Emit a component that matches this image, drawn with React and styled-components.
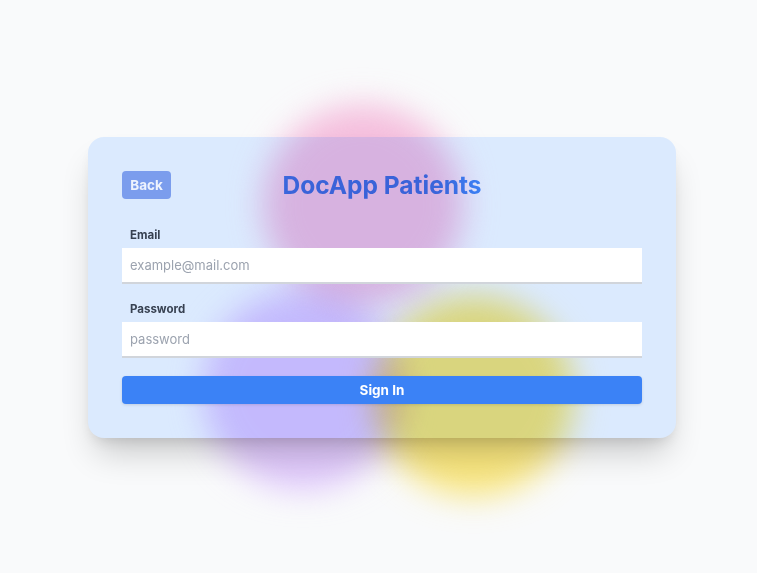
import React, { useState } from 'react';
import styled, { createGlobalStyle } from 'styled-components';

const GlobalStyle = createGlobalStyle`
  html, body {
    margin: 0;
    padding: 0;
    background: #f9fafb;
  }
  body {
    font-family: Inter, "Noto Sans", "Liberation Sans", sans-serif;
    -webkit-font-smoothing: antialiased;
  }
`;

const Stage = styled.div`
  position: relative;
  isolation: isolate;
  width: 100%;
  height: 573px;
  overflow: hidden;
  background: #f9fafb;
  padding: 137px 0 0 88px;
  box-sizing: border-box;
`;

// the blurred colour spots that multiply over the card
const Blob = styled.div`
  position: absolute;
  z-index: 1;
  width: 200px;
  height: 200px;
  border-radius: 50%;
  background: ${(p) => p.$color};
  mix-blend-mode: multiply;
  filter: blur(16px);
  opacity: 0.7;
  pointer-events: none;
`;

const Card = styled.div`
  width: 588px;
  box-sizing: border-box;
  padding: 34px;
  background: #dbeafe;
  border-radius: 16px;
  box-shadow: 0 22px 34px -8px rgba(0, 0, 0, 0.2), 0 8px 14px -6px rgba(0, 0, 0, 0.12);
`;

const Header = styled.div`
  display: grid;
  grid-template-columns: 1fr auto 1fr;
  align-items: center;
  height: 28px;
`;

const BackButton = styled.button`
  justify-self: start;
  width: 49px;
  height: 28px;
  border: none;
  border-radius: 4px;
  background: #7b9ded;
  color: #eef3fe;
  font-family: inherit;
  font-size: 13.5px;
  font-weight: 700;
  padding: 0;
  cursor: pointer;
`;

const Title = styled.h1`
  margin: 0;
  font-size: 24.5px;
  font-weight: 700;
  line-height: 28px;
  color: #3b82f6;
`;

const Form = styled.form`
  position: relative;
  z-index: 2;
  display: flex;
  flex-direction: column;
  margin-top: 28px;
`;

const Field = styled.div`
  display: flex;
  flex-direction: column;
  margin-bottom: ${(p) => p.$gap}px;
`;

const Label = styled.label`
  padding-left: 8px;
  margin-bottom: 5px;
  font-size: 11.5px;
  line-height: 16px;
  font-weight: 700;
  color: #374151;
`;

const Input = styled.input`
  display: block;
  width: 100%;
  height: 36px;
  box-sizing: border-box;
  border: none;
  border-bottom: 2px solid #d1d5db;
  border-radius: 0;
  outline: none;
  background: #fff;
  padding: 0 8px;
  font-family: inherit;
  font-size: 13px;
  color: #111827;

  &::placeholder {
    color: #9ca3af;
  }
`;

const SubmitButton = styled.button`
  height: 28px;
  border: none;
  border-radius: 4px;
  background: #3b82f6;
  color: #fff;
  font-family: inherit;
  font-size: 13.5px;
  font-weight: 700;
  box-shadow: 0 1px 3px rgba(0, 0, 0, 0.12);
  cursor: pointer;
`;

const blobs = [
  { color: '#f9a8d4', left: 263, top: 105 },
  { color: '#d8b4fe', left: 203, top: 290 },
  { color: '#fde047', left: 374, top: 296 },
];

const App = () => {
  const [email, setEmail] = useState('');
  const [password, setPassword] = useState('');

  return (
    <>
      <GlobalStyle />
      <Stage>
        {blobs.map((b) => (
          <Blob key={b.color} $color={b.color} style={{ left: b.left, top: b.top }} />
        ))}
        <Card>
          <Header>
            <BackButton type="button">Back</BackButton>
            <Title>DocApp Patients</Title>
          </Header>
          <Form onSubmit={(e) => e.preventDefault()}>
            <Field $gap={17}>
              <Label htmlFor="email">Email</Label>
              <Input
                id="email"
                type="email"
                placeholder="example@mail.com"
                value={email}
                onChange={(e) => setEmail(e.target.value)}
              />
            </Field>
            <Field $gap={18}>
              <Label htmlFor="password">Password</Label>
              <Input
                id="password"
                type="password"
                placeholder="password"
                value={password}
                onChange={(e) => setPassword(e.target.value)}
              />
            </Field>
            <SubmitButton type="submit">Sign In</SubmitButton>
          </Form>
        </Card>
      </Stage>
    </>
  );
};

export default App;
